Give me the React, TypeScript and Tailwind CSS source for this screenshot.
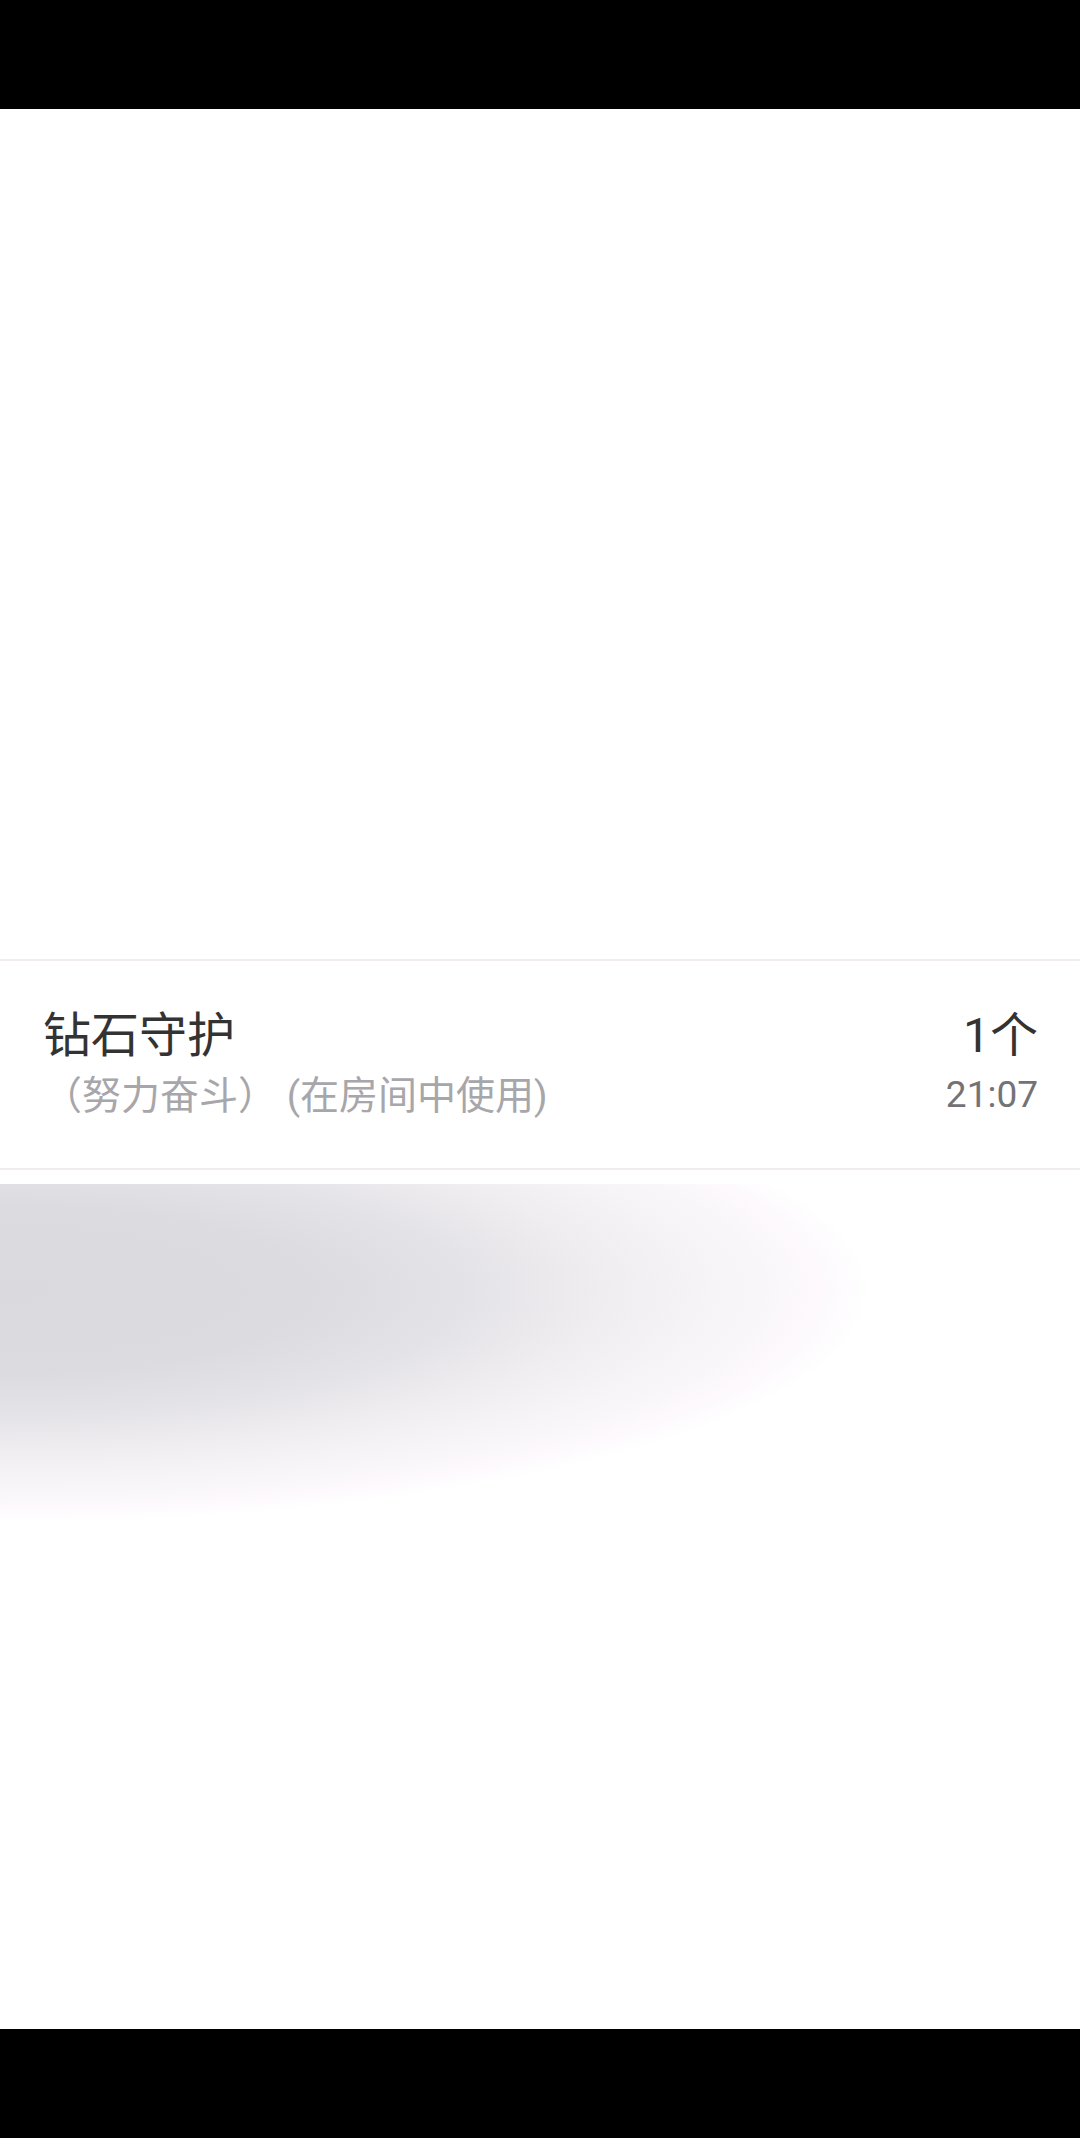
export default function App() {
  return (
    <div
      className="relative flex h-[2138px] w-[1080px] flex-col overflow-hidden bg-white"
      style={{ fontFamily: '"Roboto", "Noto Sans CJK SC", sans-serif' }}
    >
      {/* status bar */}
      <div className="h-[109px] shrink-0 bg-black" />

      <div className="relative flex flex-1 flex-col">
        <div className="h-[850px] shrink-0" />

        {/* record row */}
        <div className="flex h-[211px] shrink-0 items-start justify-between border-y-2 border-[#f0ecf0] pl-[43px] pr-[42px] pt-[47px]">
          <div className="flex flex-col">
            <span className="text-[48px] leading-[56px] text-[#333333]">钻石守护</span>
            <span className="text-[39px] leading-[64px] text-[#a7a6aa]">（努力奋斗） (在房间中使用)</span>
          </div>
          <div className="flex flex-col items-end">
            <span className="text-[48px] leading-[56px] text-[#333333]">1个</span>
            <span className="text-[37px] leading-[62px] text-[#737276]">21:07</span>
          </div>
        </div>

        <div className="flex-1" />

        {/* faded toast shadow, clipped under the row */}
        <div className="pointer-events-none absolute left-0 top-[1075px] h-[460px] w-[1000px] bg-[radial-gradient(ellipse_870px_232px_at_0px_106px,#dadade_0%,#dcdce0_36%,#e4e3e7_54%,#efedf0_69%,#f6f4f7_82%,#fdf9fd_94%,#ffffff_100%)]" />
      </div>

      {/* nav bar */}
      <div className="h-[109px] shrink-0 bg-black" />
    </div>
  );
}
